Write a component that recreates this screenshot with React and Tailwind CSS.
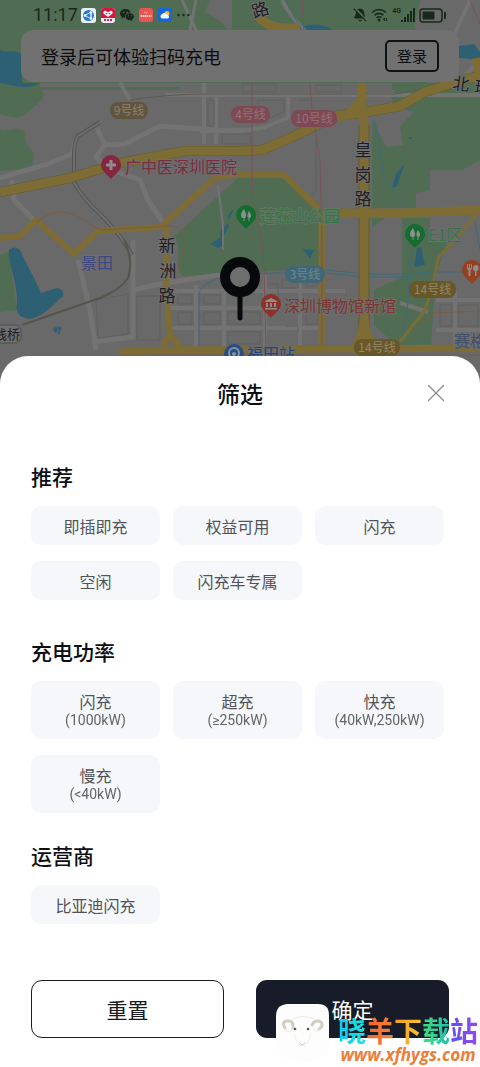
import React, { useState } from "react";
import { BellOff, X } from "lucide-react";

const RECOMMEND = ["即插即充", "权益可用", "闪充", "空闲", "闪充车专属"];
const POWER = [
  { name: "闪充", range: "(1000kW)" },
  { name: "超充", range: "(≥250kW)" },
  { name: "快充", range: "(40kW,250kW)" },
  { name: "慢充", range: "(<40kW)" },
];
const OPERATORS = ["比亚迪闪充"];

function Pin({ x, y, color, children }) {
  return (
    <g transform={`translate(${x} ${y})`}>
      <path d="M0 14 C-3 10 -10 6 -10 0 A10 10 0 1 1 10 0 C10 6 3 10 0 14Z" fill={color} />
      <g fill="#8e8e8e" stroke="none">{children}</g>
    </g>
  );
}

function LinePill({ x, y, w, color, text, label }) {
  return (
    <g>
      <rect x={x} y={y} width={w} height="17" rx="8" fill={color} />
      <text x={x + w / 2} y={y + 13} textAnchor="middle" fontSize="12" fill={text}>
        {label}
      </text>
    </g>
  );
}

function CityMap() {
  return (
    <svg
      aria-hidden="true"
      className="absolute inset-0 h-full w-full font-['Noto_Sans_CJK_SC',sans-serif]"
      viewBox="0 0 480 390"
      preserveAspectRatio="xMidYMin slice"
    >
      <rect width="480" height="390" fill="#696969" />

      {/* parks */}
      <g fill="#506d54">
        <path d="M0 0H210L205 12L222 22L228 30H232V0H420L415 26L428 90H180L0 90Z" />
        <path d="M0 83C18 90 30 82 38 88C52 96 36 104 28 112C18 122 10 116 0 114Z" />
        <path d="M84 83H99C95 88 88 87 84 83Z" />
        <path d="M0 129C8 134 18 124 25 132C23 146 33 148 34 154L32 168L0 171Z" />
        <path d="M405 83H480V160L462 170H430V190L416 193V208H372V120L386 147L403 145L400 126L414 112L395 106L390 95Z" />
        <path d="M174 236L238 178H283L319 214V268L182 276C172 262 184 250 174 236Z" />
        <path d="M372 218H385L372 228Z" />
        <path d="M402 218H430V240H448L436 275L431 345H396L374 325V290L402 277Z" />
        <path d="M0 255L9 252L17 310L0 312Z" />
      </g>
      <path d="M40 83H180V87H40ZM180 83H392V90H180Z" fill="#696969" />
      <path d="M420 0H480V83H440Q428 40 420 0Z" fill="#696969" />

      {/* water */}
      <g fill="#2e6073">
        <path d="M0 50C8 54 16 48 22 55V83H40C28 90 14 86 0 83Z" />
        <path d="M9 250Q14 245 20 250C28 268 34 276 41 293L57 288Q64 289 63 296C52 306 42 318 28 319Q14 316 17 304C18 284 8 264 9 250Z" />
        <path d="M405 163L396 174L392 188L397 186L401 174Z" />
        <path d="M408 137L412 137L411 140Z" />
        <path d="M300 28C308 22 328 24 332 30H300Z" />
        <path d="M459 46L474 44L480 52V60L459 58Z" />
        <path d="M417 248L421 247L425 265L414 267Z" />
        <path d="M234 208L231 216L227 222L229 226L223 238L224 245L218 248L210 244L220 238L221 230L227 224L229 214Z" />
        <path d="M302 249L314 250L310 259L306 253Z" />
        <path d="M53 329l4-3 1 4-3 3zM58 326l4 2-3 4zM57 332l3-1-1 4z" />
      </g>

      {/* side streets */}
      <g fill="none" stroke="#737373" strokeWidth="5">
        <path d="M0 178L20 172L48 164L72 154L76 140M12 180L14 200L34 220" />
        <path d="M97 128L105 145L125 144L160 126L240 132M105 145L96 157L106 168L140 180L148 200L164 224" />
        <path d="M120 83L130 100M204 83V144M216 96V144M200 131H240L262 128L288 118M252 130H200M288 96V118" strokeWidth="4" />
        <path d="M78 260L90 310L96 350M92 342L133 337V290V240M133 290L165 283L240 272" />
        <path d="M170 291H345M170 308H280M170 328H320" strokeWidth="4" />
        <path d="M196 285V350M224 285V350M265 275V350M300 280V345" strokeWidth="4" />
        <path d="M190 30L196 0M196 30L182 0" strokeWidth="3" />
        <path d="M400 303L428 312M436 300H480M436 330H480M455 290V345" strokeWidth="4" />
        <path d="M282 0C288 12 296 22 306 32M458 83L480 60M470 0L452 40" strokeWidth="4" />
        <path d="M218 185L223 226V250" strokeWidth="2" />
        <path d="M165 95H480" strokeWidth="4" />
      </g>
      <path d="M130 100Q160 95 200 94H395L445 85" fill="none" stroke="#5d5a4f" strokeWidth="1" />
      <g fill="none" stroke="#616161" strokeWidth="1">
        <path d="M316 85H342V92H316ZM242 84H276V92H242ZM258 100H284V112L256 124ZM298 100H312M208 100H214V126H208ZM222 134H250V144H222ZM316 140V190L308 200" />
        <path d="M270 284H278V300M282 280H298V288H282ZM286 326H298V332M306 280H318V286H306ZM306 312H318V324H306Z" />
        <path d="M178 295H192V304H178ZM204 295H220V304H204ZM178 312H192V324H178ZM204 312H220V324H204ZM228 312H260V324H228ZM228 332H260V344H228Z" />
        <path d="M137 296H160V340H137ZM96 300L128 294V334L98 338Z" />
        <path d="M440 305H452V326H440ZM459 305H478V326H459Z" />
      </g>
      <g fill="none" stroke="#3d6b7b" strokeWidth="1">
        <path d="M374 120C384 150 378 170 388 182C396 194 402 200 406 208" />
        <path d="M414 248C406 270 412 300 402 338" />
        <path d="M285 0L302 30M475 222L480 250" />
        <path d="M199 350V292Q202 284 222 277Q232 273 285 273H325L365 277C390 278 430 276 436 272H480" />
        <path d="M325 270L365 274C390 275 430 273 436 270" />
      </g>

      {/* railway */}
      <g fill="none">
        <path d="M100 122L78 136Q74 142 74 155V182Q82 198 100 214Q122 236 132 255" stroke="#545454" strokeWidth="4" />
        <path d="M102 121L78 136Q74 142 74 155V182Q82 198 100 214Q122 236 132 255" stroke="#6f6f6f" strokeWidth="2" />
        <path d="M124 240Q134 260 128 278Q120 290 100 298L22 325" stroke="#55554c" strokeWidth="2" />
      </g>

      {/* main roads */}
      <g fill="none" stroke="#655b32" strokeLinejoin="round">
        <path d="M0 192L70 178L120 163L185 151H240L262 150L290 138L335 116L367 112L400 106L425 92L462 80L480 76" strokeWidth="10" />
        <path d="M364 125V350" strokeWidth="11" />
      </g>
      <g fill="none" stroke="#7d6d34" strokeLinejoin="round">
        <path d="M0 192L70 178L120 163L185 151H240L262 150L290 138L335 116L367 112L400 106L425 92L462 80L480 76" strokeWidth="9" />
        <path d="M362 83V112L364 122V350" strokeWidth="9" />
        <path d="M258 16Q268 28 285 28H300" strokeWidth="9" />
        <path d="M476 58L480 82" strokeWidth="8" />
        <path d="M240 174H283L320 210M240 173L215 178L165 223" strokeWidth="6" />
        <path d="M335 213H400L480 210" strokeWidth="9" />
        <path d="M0 238L20 236L36 220L74 254L98 231L160 227L166 223" strokeWidth="6" />
        <path d="M166 226V290L170 335L162 346M170 335L180 346" strokeWidth="6" />
        <path d="M322 212V345" strokeWidth="7" />
        <path d="M120 352L170 350L480 348" strokeWidth="7" />
        <path d="M480 210L455 240L438 258L432 290L425 310L400 342" strokeWidth="3" />
      </g>
      <path d="M357 98L357 118L336 122ZM360 320Q360 330 352 345H378Q368 330 369 320Z" fill="#7d6d34" />

      {/* metro lines */}
      <g fill="none" stroke="#79525a" strokeWidth="1">
        <path d="M252 83V170L254 215Q264 240 264 270L266 350" />
        <path d="M310 83L312 110L320 160L322 240V345" />
        <path d="M302 0L304 30M470 0L480 24" />
      </g>
      <g fill="none" stroke="#7d5c42" strokeWidth="1">
        <path d="M36 222Q60 204 80 218L100 230L170 226Q188 228 186 240L178 270" />
        <path d="M120 355H480M480 311L434 313L410 336" />
      </g>

      <LinePill x={110} y={102} w={38} color="#62553f" text="#8b806e" label="9号线" />
      <LinePill x={231} y={106} w={39} color="#7d4a54" text="#966f77" label="4号线" />
      <LinePill x={291} y={110} w={46} color="#7d4a54" text="#966f77" label="10号线" />
      <LinePill x={285} y={266} w={40} color="#416776" text="#6b8793" label="3号线" />
      <LinePill x={409} y={281} w={47} color="#685829" text="#938666" label="14号线" />
      <LinePill x={354} y={339} w={46} color="#685829" text="#938666" label="14号线" />

      {/* places */}
      <Pin x={111} y={165} color="#86253f">
        <path d="M-5 -1.5H-1.5V-5H1.5V-1.5H5V1.5H1.5V5H-1.5V1.5H-5Z" />
      </Pin>
      <Pin x={246} y={215} color="#156b30">
        <path d="M-2 -6Q-7 0 -4 3H-2.500V6H-1.500V3Q2 2 -2 -6ZM3 -4Q0 1 2.500 3V6H3.500V3Q7 2 3 -4Z" />
      </Pin>
      <Pin x={415} y={234} color="#156b30">
        <path d="M-2 -6Q-7 0 -4 3H-2.500V6H-1.500V3Q2 2 -2 -6ZM3 -4Q0 1 2.500 3V6H3.500V3Q7 2 3 -4Z" />
      </Pin>
      <Pin x={271} y={304} color="#8d3229">
        <path d="M0 -6L6 -3V-2H-6V-3ZM-5 -1H-3V3H-5ZM-1 -1H1V3H-1ZM3 -1H5V3H3ZM-6 4H6V5.500H-6Z" />
      </Pin>
      <Pin x={472} y={270} color="#934122">
        <path d="M-5 -6V-2Q-5 0 -3.500 0V6H-1.500V0Q0 0 0 -2V-6H-1V-2H-2V-6H-3V-2H-4V-6ZM4 -5A2.500 3 0 0 1 4.500 1V6H3V1A2.500 3 0 0 1 4 -5Z" />
      </Pin>
      <circle cx="234" cy="354" r="10" fill="#2a4d86" />
      <circle cx="234" cy="353" r="5" fill="none" stroke="#8590a5" strokeWidth="2" />
      <circle cx="234" cy="354" r="2" fill="#8590a5" />

      <g fontSize="16" stroke="#6e6e6e" strokeWidth="2" paintOrder="stroke">
        <text x="125" y="173" fill="#7c2c41">广中医深圳医院</text>
        <text x="260" y="222" fill="#3a7346" stroke="#5f7862">莲花山公园</text>
        <text x="428" y="241" fill="#3a7346">E1区</text>
        <text x="284" y="312" fill="#7d352f">深圳博物馆新馆</text>
        <text x="81" y="269" fill="#3c4680">景田</text>
        <text x="247" y="360" fill="#24437f">福田站</text>
        <text x="454" y="347" fill="#3f4f68">赛格</text>
      </g>
      <g fontSize="17" fill="#1e1f24" stroke="#707070" strokeWidth="2" paintOrder="stroke" textAnchor="middle">
        <text x="363" y="156">皇</text>
        <text x="363" y="181">岗</text>
        <text x="363" y="205">路</text>
        <text x="167" y="252">新</text>
        <text x="168" y="277">洲</text>
        <text x="167" y="302">路</text>
        <text x="260" y="16" transform="rotate(-18 260 9)">路</text>
        <text x="461" y="90" transform="rotate(8 461 84)">北</text>
        <text x="483" y="94" transform="rotate(8 483 88)">环</text>
      </g>
      <rect x="-10" y="325" width="31" height="18" rx="6" fill="#6f6f6f" stroke="#4f4f4f" />
      <text x="-6" y="339" fontSize="13" fill="#1f1f1f">栈桥</text>

      {/* current position */}
      <path d="M240 290V318" stroke="#07090c" strokeWidth="5" strokeLinecap="round" />
      <circle cx="240" cy="277" r="15" fill="#6f6f6f" stroke="#07090c" strokeWidth="10" />
    </svg>
  );
}

function StatusBar() {
  return (
    <div className="flex h-[30px] items-center px-[33px] text-[#17291b]">
      <span className="font-['Roboto',sans-serif] text-[18px] leading-5">11:17</span>
      <div className="ml-[3px] flex items-center gap-[5px]">
        <svg width="15" height="15" viewBox="0 0 15 15">
          <rect width="15" height="15" rx="3" fill="#eef3fb" />
          <circle cx="7.500" cy="7.500" r="5.500" fill="#2b78d8" />
          <path d="M4 7.500L10 4V11ZM10 4V11" fill="none" stroke="#dbe8fa" strokeWidth="1" />
          <circle cx="4" cy="7.500" r="1.300" fill="#fff" />
          <circle cx="10" cy="4.500" r="1.300" fill="#fff" />
          <circle cx="10" cy="10.500" r="1.300" fill="#fff" />
        </svg>
        <svg width="14" height="15" viewBox="0 0 14 15">
          <rect width="14" height="15" rx="3" fill="#f6e9ee" />
          <path d="M0 3Q0 0 3 0H11Q14 0 14 3V10H0Z" fill="#d8153f" />
          <path d="M7 9L2.500 5.500Q2 2 5 3L7 4.500L9 3Q12 2 11.500 5.500Z" fill="#fff" />
          <circle cx="5.500" cy="5.500" r="0.800" fill="#d8153f" />
          <circle cx="8.500" cy="5.500" r="0.800" fill="#d8153f" />
          <path d="M3 12H11" stroke="#c0266c" strokeWidth="2" strokeDasharray="2 1" />
        </svg>
        <svg width="14" height="14" viewBox="0 0 14 14" fill="#16261a">
          <path d="M5.500 1C2.500 1 0 3 0 5.500C0 7 .8 8 2 8.900L1.500 10.500L3.500 9.500L5 9.800C4.500 6.500 7 4.500 10.500 4.500C10 2.500 8 1 5.500 1Z" />
          <path d="M9.800 5.200C7.400 5.200 5.600 6.800 5.600 8.800C5.600 11 7.800 12.500 10.500 12.200L12.200 13L11.800 11.600C13.200 10.800 14 9.800 14 8.700C14 6.800 12.200 5.200 9.800 5.200Z" />
          <g fill="#557158">
            <circle cx="3.700" cy="4.400" r=".8" />
            <circle cx="7.200" cy="4.200" r=".8" />
            <circle cx="8.500" cy="7.800" r=".6" />
            <circle cx="11.300" cy="7.800" r=".6" />
          </g>
        </svg>
        <svg width="14" height="14" viewBox="0 0 14 14">
          <rect width="14" height="14" rx="3" fill="#e95550" />
          <path d="M5 4Q7 6 9 4" fill="none" stroke="#f6b4ae" strokeWidth=".8" />
          <path d="M1.500 8H12.500" stroke="#f8cfca" strokeWidth="2" strokeDasharray="1.500 .5" />
        </svg>
        <svg width="14" height="14" viewBox="0 0 14 14">
          <rect width="14" height="14" rx="3" fill="#1566d6" />
          <circle cx="9" cy="5.500" r="2.500" fill="#f5b82e" />
          <path d="M4 10.500A2.200 2.200 0 0 1 4 6.300A3 3 0 0 1 9.300 6.800A2 2 0 0 1 10 10.500Z" fill="#f3f7fd" />
        </svg>
        <svg width="13" height="4" viewBox="0 0 13 4" fill="currentColor">
          <circle cx="1.500" cy="2" r="1.200" />
          <circle cx="6.500" cy="2" r="1.200" />
          <circle cx="11.500" cy="2" r="1.200" />
        </svg>
      </div>

      <div className="ml-auto flex items-center gap-1">
        <BellOff size={14} strokeWidth={2} fill="currentColor" />
        <svg width="17" height="14" viewBox="0 0 17 14" fill="none" stroke="currentColor" strokeWidth="1.600">
          <path d="M1 4.500Q8 -1.500 15 4.500M3.500 7.200Q8 3.500 12.500 7.200M5.500 9.800Q8 7.800 10.500 9.500" />
          <circle cx="8" cy="12" r=".7" fill="currentColor" />
          <path d="M12 12L13.500 10V13M15.500 10V13" strokeWidth="1" />
        </svg>
        <div className="flex items-center">
          <span className="self-start font-['Roboto',sans-serif] text-[7px] leading-[7px] font-bold">4G</span>
          <svg width="14" height="14" viewBox="0 0 14 14" fill="currentColor">
            <path d="M0 12H2V14H0ZM3 9H5V14H3ZM6 6H8V14H6ZM9 3H11V14H9ZM12 0H14V14H12Z" />
          </svg>
        </div>
        <svg width="28" height="15" viewBox="0 0 28 15">
          <rect x="1" y="1" width="22" height="13" rx="3" fill="none" stroke="currentColor" strokeWidth="1.500" />
          <rect x="3.500" y="3.500" width="12" height="8" rx="1" fill="currentColor" />
          <path d="M26 5V10" stroke="currentColor" strokeWidth="2" strokeLinecap="round" />
        </svg>
      </div>
    </div>
  );
}

function Chip({ active, onClick, tall, children }) {
  return (
    <button
      type="button"
      aria-pressed={active}
      onClick={onClick}
      className={`flex flex-col items-center justify-center rounded-[10px] text-[16px] leading-5 ${
        tall ? "h-[58px]" : "h-[39px]"
      } ${active ? "bg-[#171c28] text-white" : "bg-[#f5f7fb] text-[#505358]"}`}
    >
      {children}
    </button>
  );
}

function Section({ title, className, children }) {
  return (
    <section className={className}>
      <h2 className="mb-4 text-[21px] leading-7 font-medium text-[#0c0e12]">{title}</h2>
      <div className="mr-[5px] grid grid-cols-3 gap-x-[13px] gap-y-4">{children}</div>
    </section>
  );
}

function Watermark() {
  return (
    <div className="pointer-events-none absolute right-[2px] bottom-0 flex items-end">
      <svg width="62" height="64" viewBox="0 0 62 64">
        <path d="M0 13Q0 2 11 1L42 1Q53 1 53 12V48Q44 60 26 60Q8 60 0 46Z" fill="#fdfdfd" />
        <g fill="none" strokeLinecap="round">
          <path d="M9 25Q5 19 11 18Q18 17 17 25M43 26Q48 23 45 19Q39 16 36 22" stroke="#d3cdc0" strokeWidth="3" />
          <path d="M9 27Q17 31 17 25M44 27Q38 30 38 25M17 16Q26 11 38 16" stroke="#ece8df" strokeWidth="1" />
          <path d="M18 31Q20 39 24 42Q28 45 32 39L35 30" stroke="#eeeeec" strokeWidth="1" />
          <path d="M24 40L26 42L29 40" stroke="#cfcac5" strokeWidth="1" />
        </g>
        <circle cx="19" cy="26" r="1.300" fill="#555" />
        <circle cx="32" cy="26" r="1.300" fill="#555" />
      </svg>
      <div className="flex flex-col items-center pb-[2px]">
        <p className="text-[28px] leading-[30px] font-bold">
          <span className="bg-linear-to-r from-[#10c8f4] to-[#1be6dc] bg-clip-text text-transparent">晓</span>
          <span className="bg-linear-to-r from-[#f5642c] to-[#f2823a] bg-clip-text text-transparent">羊</span>
          <span className="bg-linear-to-r from-[#f39a2c] to-[#f8c52c] bg-clip-text text-transparent">下</span>
          <span className="bg-linear-to-r from-[#3fe07c] to-[#22bfae] bg-clip-text text-transparent">载</span>
          <span className="bg-linear-to-r from-[#5a50f2] to-[#9448ee] bg-clip-text text-transparent">站</span>
        </p>
        <p className="font-['Open_Sans',sans-serif] text-[17px] leading-5 font-bold text-[#ec7d3a] italic">
          www.xfhygs.com
        </p>
      </div>
    </div>
  );
}

function App() {
  const [selected, setSelected] = useState([]);

  const toggle = (key) => {
    setSelected((prev) =>
      prev.includes(key) ? prev.filter((item) => item !== key) : [...prev, key]
    );
  };

  return (
    <div className="relative flex min-h-screen flex-col overflow-hidden bg-white font-['Noto_Sans_CJK_SC',sans-serif]">
      <header className="relative h-[390px]">
        <CityMap />
        <div className="relative">
          <StatusBar />
          <div className="mx-[21px] flex h-[52px] items-center justify-between rounded-xl bg-[#717171] px-5">
            <p className="text-[18px] leading-6 text-[#0c0d0f]">登录后可体验扫码充电</p>
            <button
              type="button"
              className="h-8 w-[54px] rounded-[5px] border-2 border-[#111214] text-[15px] leading-5 text-[#0c0d0f]"
            >
              登录
            </button>
          </div>
        </div>
      </header>

      <main className="relative -mt-[34px] flex-1 rounded-t-[28px] bg-white px-[31px] pt-[21px] pb-[29px]">
        <div className="mb-[53px] grid grid-cols-[1fr_auto_1fr] items-center">
          <h1 className="col-start-2 text-[23px] leading-8 font-medium text-[#0c0e12]">筛选</h1>
          <button type="button" aria-label="关闭" className="-mr-0.5 justify-self-end text-[#8b8b8b]">
            <X size={30} strokeWidth={1} />
          </button>
        </div>

        <Section title="推荐">
          {RECOMMEND.map((name) => (
            <Chip key={name} active={selected.includes(name)} onClick={() => toggle(name)}>
              {name}
            </Chip>
          ))}
        </Section>

        <Section title="充电功率" className="mt-[37px]">
          {POWER.map((item) => (
            <Chip
              key={item.range}
              tall
              active={selected.includes(item.range)}
              onClick={() => toggle(item.range)}
            >
              <span>{item.name}</span>
              <span className="font-['Roboto',sans-serif] text-[14px] leading-[18px] opacity-90">
                {item.range}
              </span>
            </Chip>
          ))}
        </Section>

        <Section title="运营商" className="mt-7">
          {OPERATORS.map((name) => (
            <Chip key={name} active={selected.includes(name)} onClick={() => toggle(name)}>
              {name}
            </Chip>
          ))}
        </Section>

        <div className="mt-14 grid grid-cols-2 gap-8">
          <button
            type="button"
            onClick={() => setSelected([])}
            className="h-[58px] rounded-[11px] border border-[#171c28] text-[21px] leading-7 text-[#171a20]"
          >
            重置
          </button>
          <button
            type="button"
            className="h-[58px] rounded-[11px] bg-[#171c28] text-[21px] leading-7 text-white"
          >
            确定
          </button>
        </div>
      </main>

      <Watermark />
    </div>
  );
}

export default App;
